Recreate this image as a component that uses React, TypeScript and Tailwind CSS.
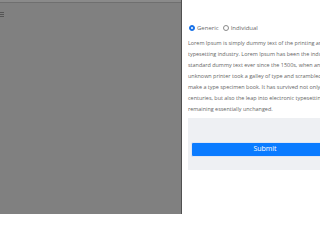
import { useState } from "react"

// wrapped the way the reference panel wraps it
const LINES = [
  "Lorem Ipsum is simply dummy text of the printing and",
  "typesetting industry. Lorem Ipsum has been the industry's",
  "standard dummy text ever since the 1500s, when an",
  "unknown printer took a galley of type and scrambled it to",
  "make a type specimen book. It has survived not only five",
  "centuries, but also the leap into electronic typesetting,",
  "remaining essentially unchanged.",
]

function Radio({ checked, label, onClick }: { checked: boolean; label: string; onClick: () => void }) {
  return (
    <button onClick={onClick} className="flex items-center gap-[2px]">
      <span
        className={
          checked
            ? "flex h-[6px] w-[6px] items-center justify-center rounded-full border border-[#1a73e8] bg-[#1a73e8]"
            : "flex h-[6px] w-[6px] items-center justify-center rounded-full border border-[#8a8a8a] bg-white"
        }
      >
        {checked && <span className="h-[2px] w-[2px] rounded-full bg-white" />}
      </span>
      <span className="text-[6px] leading-none text-[#6a6a6a]">{label}</span>
    </button>
  )
}

export default function App() {
  const [mode, setMode] = useState("generic")

  return (
    <div className="flex h-[214px] w-[320px] overflow-hidden font-['Open_Sans',sans-serif]">
      <div className="flex w-[181px] shrink-0 flex-col bg-[#808080]">
        <div className="h-[3px] border-b border-[#6f6f6f] bg-[#8a8a8a]" />
        <div className="mt-[9px] flex flex-col gap-[1px] pl-0">
          <span className="h-[1px] w-[4px] bg-[#555]" />
          <span className="h-[1px] w-[4px] bg-[#555]" />
          <span className="h-[1px] w-[4px] bg-[#555]" />
        </div>
      </div>
      <div className="flex w-[167px] shrink-0 flex-col border-l border-[#505050] bg-white px-[6px] pt-[25px]">
        <div className="flex items-center gap-[4px] pl-[1px]">
          <Radio checked={mode === "generic"} label="Generic" onClick={() => setMode("generic")} />
          <Radio checked={mode === "individual"} label="Individual" onClick={() => setMode("individual")} />
        </div>
        <p className="mt-[7px] whitespace-nowrap text-[5.45px] leading-[11px] text-[#666]">
          {LINES.map((line) => (
            <span key={line} className="block">
              {line}
            </span>
          ))}
        </p>
        <div className="mt-[3px] bg-[#eef0f3] px-[3px] pt-[15px] pb-[13px]">
          <button className="h-[15px] w-full rounded-[2px] border border-[#dfe6f5] bg-[#0a7bff] text-[7px] text-white">
            Submit
          </button>
        </div>
      </div>
    </div>
  )
}
